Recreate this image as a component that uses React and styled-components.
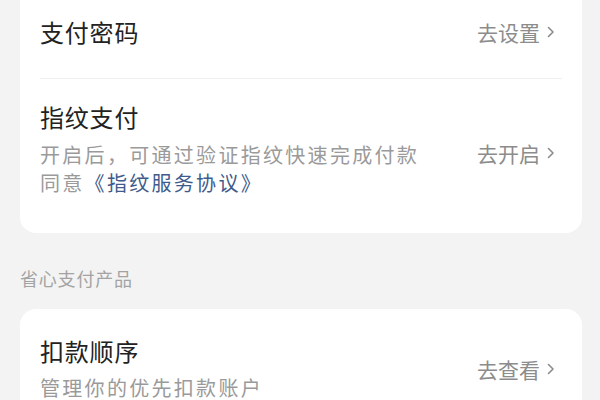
import React from "react"
import styled, { createGlobalStyle } from "styled-components"

const GlobalStyle = createGlobalStyle`
  html, body {
    margin: 0;
    padding: 0;
    background: #f3f3f3;
    font-family: "Noto Sans CJK SC", "Noto Sans", sans-serif;
  }
`

const Page = styled.div`
  width: 600px;
  height: 400px;
  overflow: hidden;
  background: #f3f3f3;
  padding: 0 18px 0 20px;
  box-sizing: border-box;
`

const Card = styled.div`
  background: #fff;
  border-radius: 16px;
  margin-top: ${props => props.offset || 0}px;
  overflow: hidden;
`

const Row = styled.div`
  display: flex;
  align-items: center;
  justify-content: space-between;
  padding: ${props => props.pad};
  margin: 0 20px;
  border-bottom: ${props => (props.divider ? "1px solid #efefef" : "none")};
`

const Info = styled.div`
  display: flex;
  flex-direction: column;
`

const Title = styled.div`
  font-size: 24px;
  line-height: 32px;
  color: #222;
  letter-spacing: 0.8px;
`

const Desc = styled.div`
  font-size: 20px;
  line-height: 28px;
  color: #9a9a9a;
  letter-spacing: 2.3px;
  margin-top: ${props => props.gap || 0}px;
`

const Link = styled.span`
  color: #3f5b8c;
`

const Action = styled.div`
  display: flex;
  align-items: center;
  gap: 7px;
  font-size: 21px;
  color: #8c8c8c;
  margin-right: 7px;
  margin-top: ${props => props.drop || 0}px;
  white-space: nowrap;
`

const SectionLabel = styled.div`
  font-size: 18px;
  line-height: 24px;
  color: #a3a3a3;
  padding: 33px 0 19px;
  letter-spacing: 0.8px;
`

const Chevron = () => (
  <svg width="8" height="12" viewBox="0 0 8 12" fill="none">
    <path d="M1.5 1.5 L6 6 L1.5 10.5" stroke="#8c8c8c" strokeWidth="1.6" strokeLinecap="round" strokeLinejoin="round" />
  </svg>
)

const Go = ({ label, drop }) => (
  <Action drop={drop}>
    {label}
    <Chevron />
  </Action>
)

export default function App() {
  return (
    <>
      <GlobalStyle />
      <Page>
        <Card offset={-14}>
          <Row divider pad="30px 0 30px">
            <Title>支付密码</Title>
            <Go label="去设置" />
          </Row>
          <Row pad="22px 0 36px">
            <Info>
              <Title>指纹支付</Title>
              <Desc gap={8}>开启后，可通过验证指纹快速完成付款</Desc>
              <Desc>
                同意<Link>《指纹服务协议》</Link>
              </Desc>
            </Info>
            <Go label="去开启" drop={8} />
          </Row>
        </Card>
        <SectionLabel>省心支付产品</SectionLabel>
        <Card>
          <Row pad="26px 0 27px">
            <Info>
              <Title>扣款顺序</Title>
              <Desc gap={7}>管理你的优先扣款账户</Desc>
            </Info>
            <Go label="去查看" />
          </Row>
        </Card>
      </Page>
    </>
  )
}
